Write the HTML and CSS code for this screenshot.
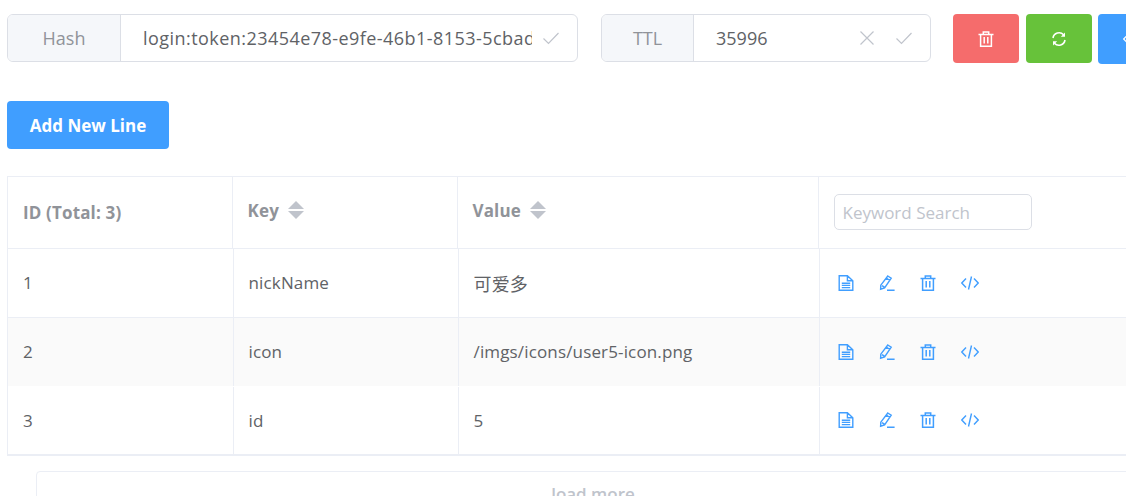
FILE: index.html
```html
<!DOCTYPE html>
<html lang="en">
<head>
    <meta charset="UTF-8">
    <meta name="viewport" content="width=device-width, initial-scale=1.0">
    <title>Hash key</title>
    <link rel="stylesheet" href="styles.css">
</head>
<body>
    <svg class="defs" width="0" height="0">
        <symbol id="i-check" viewBox="0 0 16 16"><path d="M.5 8.5l5 5L15.5 3" fill="none" stroke="currentColor" stroke-width="1.2"/></symbol>
        <symbol id="i-close" viewBox="0 0 16 16"><path d="M1.5 1.5l13 13M14.5 1.5l-13 13" fill="none" stroke="currentColor" stroke-width="1.2"/></symbol>
        <symbol id="i-trash" viewBox="0 0 16 16"><path d="M.5 3.5h15M5.3 3.5V1h5.4v2.5M2.6 3.5v11.7h10.8V3.5M6.2 6v6.6M9.8 6v6.6" fill="none" stroke="currentColor" stroke-width="1.5"/></symbol>
        <symbol id="i-refresh" viewBox="0 0 16 16"><path d="M2 7a6.2 6.2 0 0 1 10.6-3.3M14 9a6.2 6.2 0 0 1-10.6 3.3" fill="none" stroke="currentColor" stroke-width="1.6"/><path d="M14 1.5v4.3H9.8zM2 14.5v-4.3h4.2z" fill="currentColor"/></symbol>
        <symbol id="i-doc" viewBox="0 0 16 16"><path d="M1.2.8h8.2l5.4 5v9.4H1.2zM9.4.8v5h5.4M3.8 8.2h8.4M3.8 10.4h8.4M3.8 12.6h8.4" fill="none" stroke="currentColor" stroke-width="1.4"/></symbol>
        <symbol id="i-edit" viewBox="0 0 16 16"><path d="M8.8 1l3.4 2.2-6.6 9.6-4 1.4.2-4zM7.4 3.2l3.5 2.3M3 10.6l2.4 1.6M8 15.2h7.6" fill="none" stroke="currentColor" stroke-width="1.4"/></symbol>
        <symbol id="i-code" viewBox="0 0 18 16"><path d="M5 3.5L.8 8 5 12.5M13 3.5L17.2 8 13 12.5M10.5 1.5l-3 13" fill="none" stroke="currentColor" stroke-width="1.4"/></symbol>
    </svg>

    <div class="page">
        <div class="toolbar">
            <div class="input-group hash-group">
                <span class="prepend hash-label">Hash</span>
                <div class="field">
                    <span class="field-text hash-text">login:token:23454e78-e9fe-46b1-8153-5cbad</span>
                    <svg class="field-icon"><use href="#i-check"/></svg>
                </div>
            </div>
            <div class="input-group ttl-group">
                <span class="prepend ttl-label">TTL</span>
                <div class="field">
                    <span class="field-text">35996</span>
                    <svg class="field-icon icon-close"><use href="#i-close"/></svg>
                    <svg class="field-icon"><use href="#i-check"/></svg>
                </div>
            </div>
            <div class="actions">
                <button class="btn btn-red"><svg class="btn-icon"><use href="#i-trash"/></svg></button>
                <button class="btn btn-green"><svg class="btn-icon"><use href="#i-refresh"/></svg></button>
                <button class="btn btn-blue"><svg class="btn-icon"><use href="#i-code"/></svg></button>
            </div>
        </div>

        <button class="add-line">Add New Line</button>

        <div class="table">
            <table class="head-table">
                <tr>
                    <th class="head-id">ID (Total: 3)</th>
                    <th class="head-key"><span class="sort-cell">Key <span class="sorter"></span></span></th>
                    <th class="head-value"><span class="sort-cell">Value <span class="sorter"></span></span></th>
                    <th class="head-search"><input class="search" type="text" placeholder="Keyword Search"></th>
                </tr>
            </table>
            <table class="body-table">
                <tr>
                    <td class="col-id">1</td>
                    <td class="col-key">nickName</td>
                    <td class="col-value col-cjk">可爱多</td>
                    <td class="col-ops">
                        <div class="ops">
                            <svg class="op"><use href="#i-doc"/></svg>
                            <svg class="op"><use href="#i-edit"/></svg>
                            <svg class="op"><use href="#i-trash"/></svg>
                            <svg class="op op-code"><use href="#i-code"/></svg>
                        </div>
                    </td>
                </tr>
                <tr class="striped">
                    <td class="col-id">2</td>
                    <td class="col-key">icon</td>
                    <td class="col-value">/imgs/icons/user5-icon.png</td>
                    <td class="col-ops">
                        <div class="ops">
                            <svg class="op"><use href="#i-doc"/></svg>
                            <svg class="op"><use href="#i-edit"/></svg>
                            <svg class="op"><use href="#i-trash"/></svg>
                            <svg class="op op-code"><use href="#i-code"/></svg>
                        </div>
                    </td>
                </tr>
                <tr>
                    <td class="col-id">3</td>
                    <td class="col-key">id</td>
                    <td class="col-value">5</td>
                    <td class="col-ops">
                        <div class="ops">
                            <svg class="op"><use href="#i-doc"/></svg>
                            <svg class="op"><use href="#i-edit"/></svg>
                            <svg class="op"><use href="#i-trash"/></svg>
                            <svg class="op op-code"><use href="#i-code"/></svg>
                        </div>
                    </td>
                </tr>
            </table>
        </div>

        <button class="load-more">load more</button>
    </div>
</body>
</html>
```

FILE: styles.css
```css
html, body {
    margin: 0;
    height: 100%;
    overflow: hidden;
}
body {
    background: #fff;
    color: #606266;
    font-family: "Open Sans", "Noto Sans CJK SC", sans-serif;
    font-size: 17px;
}
.defs {
    display: block;
    height: 0;
}
.page {
    width: 1400px;
    padding: 14px 0 0 7px;
}
.toolbar {
    display: flex;
    align-items: flex-start;
    height: 48px;
}
.input-group {
    display: flex;
    height: 48px;
    box-sizing: border-box;
    border: 1px solid #dcdfe6;
    border-radius: 6px;
    overflow: hidden;
    font-size: 18px;
}
.hash-group {
    width: 571px;
}
.ttl-group {
    width: 330px;
    margin-left: 23px;
}
.prepend {
    display: flex;
    align-items: center;
    justify-content: center;
    box-sizing: border-box;
    background: #f5f7fa;
    border-right: 1px solid #dcdfe6;
    color: #909399;
}
.hash-label {
    width: 113px;
}
.ttl-label {
    width: 92px;
}
.field {
    flex: 1;
    display: flex;
    align-items: center;
    min-width: 0;
    padding-left: 22px;
    padding-right: 18px;
}
.field-text {
    flex: 1;
    min-width: 0;
    overflow: hidden;
    white-space: nowrap;
    margin-right: 11px;
}
.hash-text {
    letter-spacing: 0.45px;
}
.field-icon {
    width: 16px;
    height: 16px;
    color: #c0c4cc;
}
.icon-close {
    margin-right: 21px;
}
.actions {
    display: flex;
    margin-left: 22px;
}
.btn {
    width: 66px;
    height: 49px;
    margin-right: 7px;
    padding: 0;
    border: none;
    border-radius: 4px;
    color: #fff;
    display: flex;
    align-items: center;
    justify-content: center;
}
.btn-red {
    background: #f56c6c;
}
.btn-green {
    background: #67c23a;
    margin-right: 6px;
}
.btn-blue {
    background: #409eff;
    height: 50px;
}
.btn-icon {
    width: 16px;
    height: 16px;
}
.add-line {
    display: block;
    width: 162px;
    height: 48px;
    margin-top: 39px;
    padding: 0;
    border: none;
    border-radius: 4px;
    background: #409eff;
    color: #fff;
    font-family: inherit;
    font-size: 17px;
    font-weight: 700;
}
.table {
    width: 1300px;
    margin-top: 27px;
    border-top: 1px solid #ebeef5;
    border-left: 1px solid #ebeef5;
    border-bottom: 2px solid #ebeef5;
}
table {
    border-collapse: collapse;
    table-layout: fixed;
    width: 1300px;
}
th {
    height: 71px;
    padding: 0;
    box-sizing: border-box;
    border-right: 1px solid #ebeef5;
    border-bottom: 1px solid #ebeef5;
    color: #909399;
    font-size: 17px;
    font-weight: 700;
    letter-spacing: 0.15px;
    text-align: left;
}
td {
    height: 69px;
    padding: 0;
    box-sizing: border-box;
    border-right: 1px solid #ebeef5;
    border-bottom: 1px solid #ebeef5;
    letter-spacing: 0.15px;
}
tr:last-child td {
    border-bottom: none;
    height: 67px;
}
.head-id {
    width: 224px;
    padding-left: 15px;
}
.head-key {
    width: 225px;
    padding-left: 15px;
}
.head-value {
    width: 361px;
    padding-left: 15px;
}
.col-id {
    width: 225px;
    padding-left: 15px;
}
.col-key {
    width: 225px;
    padding-left: 15px;
}
.col-value {
    width: 361px;
    padding-left: 15px;
}
.col-cjk {
    font-size: 18px;
}
.head-search {
    padding-left: 15px;
}
.striped td {
    background: #fafafa;
    border-bottom-color: #fff;
}
.striped .col-id,
.striped .col-key,
.striped .col-value {
    padding-bottom: 2px;
}
.sort-cell {
    display: inline-flex;
    align-items: center;
    gap: 9px;
    position: relative;
    top: -2px;
}
.sorter {
    display: inline-block;
    width: 0;
    height: 18px;
    border-left: 8px solid transparent;
    border-right: 8px solid transparent;
    position: relative;
}
.sorter::before,
.sorter::after {
    content: "";
    position: absolute;
    left: -8px;
    border-left: 8px solid transparent;
    border-right: 8px solid transparent;
}
.sorter::before {
    top: 0;
    border-bottom: 8px solid #c0c4cc;
}
.sorter::after {
    bottom: 0;
    border-top: 8px solid #c0c4cc;
}
.search {
    display: block;
    width: 198px;
    height: 36px;
    box-sizing: border-box;
    padding: 0 8px;
    border: 1px solid #dcdfe6;
    border-radius: 5px;
    font-family: inherit;
    font-size: 17px;
    font-weight: 400;
}
.search::placeholder {
    color: #c0c4cc;
}
.ops {
    display: flex;
    align-items: center;
    gap: 25px;
    padding-left: 18px;
    color: #409eff;
}
.op {
    width: 16px;
    height: 16px;
}
.op-code {
    width: 18px;
}
.load-more {
    display: block;
    width: 1114px;
    height: 46px;
    margin-top: 15px;
    margin-left: 29px;
    background: #fff;
    border: 1px solid #ebeef5;
    border-radius: 4px;
    color: #c0c4cc;
    font-family: inherit;
    font-size: 17px;
    font-weight: 600;
}
```
